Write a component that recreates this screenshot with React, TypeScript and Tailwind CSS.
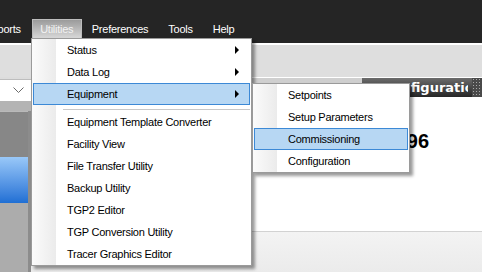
const mainItems: { label: string; arrow?: boolean; active?: boolean }[] = [
  { label: 'Status', arrow: true },
  { label: 'Data Log', arrow: true },
  { label: 'Equipment', arrow: true, active: true },
]

const toolItems = [
  'Equipment Template Converter',
  'Facility View',
  'File Transfer Utility',
  'Backup Utility',
  'TGP2 Editor',
  'TGP Conversion Utility',
  'Tracer Graphics Editor',
]

const subItems = ['Setpoints', 'Setup Parameters', 'Commissioning', 'Configuration']

function MenuItem({ label, arrow, active }: { label: string; arrow?: boolean; active?: boolean }) {
  return (
    <div
      className={
        'relative mx-[1px] flex h-[22px] items-center border ' +
        (active ? 'border-[#3c89d6] bg-[#b7d7f3]' : 'border-transparent')
      }
    >
      <span className="pl-[33px] whitespace-nowrap">{label}</span>
      {arrow && (
        <span className="ml-auto mr-[10px] h-0 w-0 border-y-[4px] border-l-[4px] border-y-transparent border-l-black" />
      )}
    </div>
  )
}

function Menu({ className, children }: { className: string; children: React.ReactNode }) {
  return (
    <div
      className={
        'absolute border border-[#9a9a9a] bg-white shadow-[3px_3px_3px_rgba(0,0,0,0.4)] ' + className
      }
    >
      {/* icon column */}
      <div className="absolute inset-y-0 left-0 w-[24px] bg-gradient-to-r from-[#fbfbfb] to-[#ebebeb]" />
      <div className="relative">{children}</div>
    </div>
  )
}

export default function App() {
  return (
    <div className="relative h-[272px] w-[482px] overflow-hidden bg-[#dedede] font-['Liberation_Sans',Arial,sans-serif] text-[11px] tracking-[-0.25px] text-black">
      {/* menu bar */}
      <div className="h-[43px] bg-[#252525] pt-[19px]">
        <div className="flex h-[19px] items-center text-white">
          <span className="ml-[-16px] pr-[11px] pt-[1px]">Reports</span>
          <span className="flex h-[19px] w-[50px] items-center justify-center border border-b-0 border-[#bdbdbd] bg-gradient-to-b from-[#9b9b9b] to-[#d8d8d8] pt-[1px] text-[#f2f2f2]">
            Utilities
          </span>
          <span className="px-[10px] pt-[1px]">Preferences</span>
          <span className="px-[10px] pt-[1px]">Tools</span>
          <span className="px-[10px] pt-[1px]">Help</span>
        </div>
      </div>
      <div className="h-[2px] bg-white" />
      <div className="h-[32px] bg-[#dedede]" />

      {/* main area */}
      <div className="flex h-[195px]">
        <div className="flex w-[31px] flex-col">
          <div className="h-[2px] bg-[#dcdcdc]" />
          <div className="flex h-[22px] items-center border-t border-[#bdbdbd] bg-white pl-[13px]">
            <svg width="11" height="7" viewBox="0 0 11 7">
              <polyline points="0.5,0.5 5.5,5.5 10.5,0.5" fill="none" stroke="#6a6a6a" strokeWidth="1" />
            </svg>
          </div>
          <div className="h-[10px] bg-[#b4b4b4]" />
          <div className="flex flex-1 flex-col border-r-[3px] border-[#8c8c8c] bg-[#acacac]">
            <div className="h-[46px] border-t border-[#b9b9b9] bg-[#878787]" />
            <div className="h-[46px] bg-gradient-to-b from-[#99c8f8] to-[#1f6fd4]" />
          </div>
        </div>

        <div className="flex flex-1 flex-col">
          <div className="h-[1px] bg-white" />
          <div className="flex h-[19px]">
            <div className="flex-1 bg-[#cfcfcf]" />
            <div className="w-[110px] bg-gradient-to-b from-[#6c6c6c] to-[#272727] pl-[21px] pr-[4px]">
              <div className="overflow-hidden whitespace-nowrap font-['DejaVu_Sans',Verdana,sans-serif] text-[13px] leading-[19px] font-bold tracking-normal text-white">
                Configuration
              </div>
            </div>
            <div className="w-[10px] bg-[#4a4a4a] bg-[radial-gradient(#a8a8a8_0.8px,transparent_0.9px)] bg-[length:3px_3px]" />
          </div>
          <div className="flex-1 bg-white pt-[32px]">
            <div className="w-[398px] text-right text-[20px] leading-[24px] font-bold tracking-normal">
              Controller 96
            </div>
          </div>
          <div className="h-[41px] border-t border-[#d2d2d2] bg-gradient-to-b from-[#f3f3f3] to-[#ebebeb]" />
        </div>
      </div>

      {/* Utilities dropdown */}
      <Menu className="left-[31px] top-[38px] w-[221px]">
        {mainItems.map((it) => (
          <MenuItem key={it.label} {...it} />
        ))}
        <div className="h-[6px] pt-[4px]">
          <div className="ml-[31px] mr-[1px] border-t border-[#c8c8c8]" />
        </div>
        {toolItems.map((t) => (
          <MenuItem key={t} label={t} />
        ))}
      </Menu>

      {/* Equipment submenu */}
      <Menu className="left-[252px] top-[83px] w-[158px]">
        {subItems.map((s) => (
          <MenuItem key={s} label={s} active={s === 'Commissioning'} />
        ))}
      </Menu>
    </div>
  )
}
